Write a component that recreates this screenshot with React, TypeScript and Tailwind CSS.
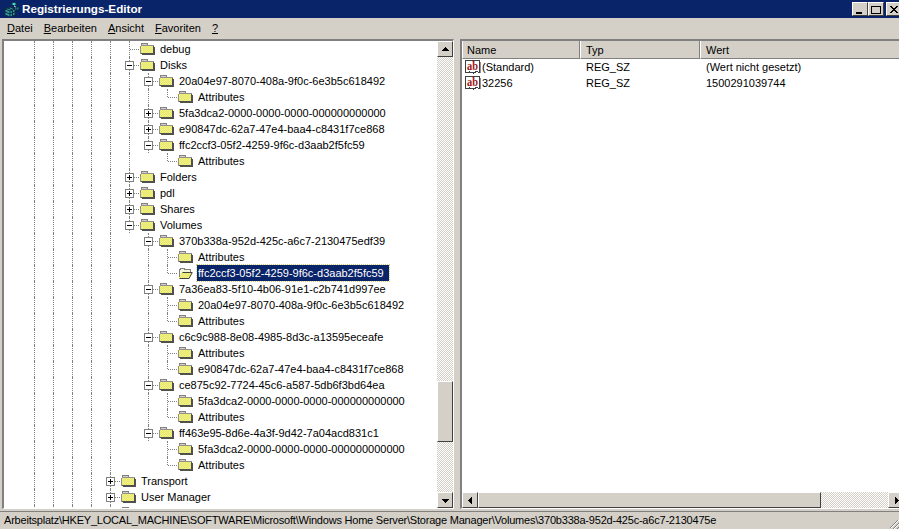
type Row = { guides: string; join?: "tee" | "end"; box?: "plus" | "minus"; label?: string; open?: boolean };

// each char of guides is one 19px column: "|" has a line, "." is empty. The last column holds box/connector.
const base = "||||";
const rows: Row[] = [
  { guides: base + "||", join: "tee", label: "debug" },
  { guides: base + "||", box: "minus", label: "Disks" },
  { guides: base + "|||", box: "minus", label: "20a04e97-8070-408a-9f0c-6e3b5c618492" },
  { guides: base + "||||", join: "end", label: "Attributes" },
  { guides: base + "|||", box: "plus", label: "5fa3dca2-0000-0000-0000-000000000000" },
  { guides: base + "|||", box: "plus", label: "e90847dc-62a7-47e4-baa4-c8431f7ce868" },
  { guides: base + "|||", box: "minus", label: "ffc2ccf3-05f2-4259-9f6c-d3aab2f5fc59" },
  { guides: base + "||.|", join: "end", label: "Attributes" },
  { guides: base + "||", box: "plus", label: "Folders" },
  { guides: base + "||", box: "plus", label: "pdl" },
  { guides: base + "||", box: "plus", label: "Shares" },
  { guides: base + "||", box: "minus", label: "Volumes" },
  { guides: base + "|.|", box: "minus", label: "370b338a-952d-425c-a6c7-2130475edf39" },
  { guides: base + "|.||", join: "tee", label: "Attributes" },
  { guides: base + "|.||", join: "end", label: "ffc2ccf3-05f2-4259-9f6c-d3aab2f5fc59", open: true },
  { guides: base + "|.|", box: "minus", label: "7a36ea83-5f10-4b06-91e1-c2b741d997ee" },
  { guides: base + "|.||", join: "tee", label: "20a04e97-8070-408a-9f0c-6e3b5c618492" },
  { guides: base + "|.||", join: "end", label: "Attributes" },
  { guides: base + "|.|", box: "minus", label: "c6c9c988-8e08-4985-8d3c-a13595eceafe" },
  { guides: base + "|.||", join: "tee", label: "Attributes" },
  { guides: base + "|.||", join: "end", label: "e90847dc-62a7-47e4-baa4-c8431f7ce868" },
  { guides: base + "|.|", box: "minus", label: "ce875c92-7724-45c6-a587-5db6f3bd64ea" },
  { guides: base + "|.||", join: "tee", label: "5fa3dca2-0000-0000-0000-000000000000" },
  { guides: base + "|.||", join: "end", label: "Attributes" },
  { guides: base + "|.|", box: "minus", label: "ff463e95-8d6e-4a3f-9d42-7a04acd831c1" },
  { guides: base + "|..|", join: "tee", label: "5fa3dca2-0000-0000-0000-000000000000" },
  { guides: base + "|..|", join: "end", label: "Attributes" },
  { guides: base + "|", box: "plus", label: "Transport" },
  { guides: base + "|", box: "plus", label: "User Manager" },
  { guides: base + "|", join: "end" },
];

const values = [
  { name: "(Standard)", type: "REG_SZ", value: "(Wert nicht gesetzt)" },
  { name: "32256", type: "REG_SZ", value: "1500291039744" },
];

const raised = "border border-t-white border-l-white border-r-[#404040] border-b-[#404040]";

const Dither = () => (
  <defs>
    <pattern id="dither" width="2" height="2" patternUnits="userSpaceOnUse">
      <rect width="2" height="2" fill="#f8f850" />
      <rect width="1" height="1" fill="#e0e0a0" />
      <rect x="1" y="1" width="1" height="1" fill="#e0e0a0" />
    </pattern>
  </defs>
);

const Folder = ({ open }: { open?: boolean }) => (
  <svg width="15" height="12" viewBox="0 0 15 12" className="shrink-0 ml-px" shapeRendering="crispEdges">
    <Dither />
    {open ? (
      <>
        <path d="M1.5 10.5v-8h1v-1h4v1h6v2" fill="#f4f4d8" stroke="#808080" />
        <rect x="2" y="3" width="10" height="3" fill="#f4f4d8" />
        <path d="M4 5h10.5l-3 6.5H1z" fill="url(#dither)" />
        <path d="M4.5 5.5h10M14 6l-3 5.5H1.500" fill="none" stroke="#404040" shapeRendering="auto" />
      </>
    ) : (
      <>
        <path d="M2 .5h5l1 2h5v1H1V1.500z" fill="#d4d0c8" stroke="#808080" />
        <rect x="1" y="2" width="12" height="8" fill="url(#dither)" />
        <path d="M.5 10.500v-8M.5 2.500h13" fill="none" stroke="#909090" />
        <path d="M13.500 3v7.500H1M14.500 4v7.500H2" fill="none" stroke="#505050" />
      </>
    )}
  </svg>
);

const ValueIcon = () => (
  <svg width="16" height="16" viewBox="0 0 16 16" className="shrink-0 block">
    <path d="M.5 1.500h14v12l-3-1-3 1.500-4-1-4 1z" fill="#fff" stroke="#404040" shapeRendering="crispEdges" />
    <path d="M15.500 3v11" stroke="#909090" shapeRendering="crispEdges" />
    <text x="2" y="11" fill="#a01414" fontSize="12" fontWeight="700" textLength="11" lengthAdjust="spacingAndGlyphs" fontFamily="'Liberation Serif', serif">ab</text>
  </svg>
);

const Arrow = ({ d }: { d: string }) => (
  <svg width="9" height="9" viewBox="0 0 9 9" shapeRendering="crispEdges">
    <path d={d} fill="#000" />
  </svg>
);

const ScrollButton = ({ d }: { d: string }) => (
  <div className={`w-[16px] h-[16px] shrink-0 bg-[#d4d0c8] flex items-center justify-center ${raised}`}>
    <Arrow d={d} />
  </div>
);

const TreeRow = ({ row }: { row: Row }) => {
  const cols = row.guides.split("");
  return (
    <div className="flex h-4 items-center shrink-0 pl-[21px]">
      {cols.map((c, i) => {
        const last = i === cols.length - 1;
        return (
          <div key={i} className="relative w-[19px] h-4 shrink-0">
            {c === "|" && !(last && row.box) && (
              <div
                className={`absolute left-[9px] top-0 border-l border-dotted border-[#808080] ${
                  last && row.join === "end" ? "h-[8px]" : "h-4"
                }`}
              />
            )}
            {last && row.box && (
              <>
                <div className="absolute left-[9px] top-0 h-4 border-l border-dotted border-[#808080]" />
                <div className="absolute left-[5px] top-[4px] w-[9px] h-[9px] bg-white border border-[#808080] z-10">
                  <svg width="7" height="7" viewBox="0 0 7 7" shapeRendering="crispEdges" className="block">
                    <rect x="1" y="3" width="5" height="1" fill="#000" />
                    {row.box === "plus" && <rect x="3" y="1" width="1" height="5" fill="#000" />}
                  </svg>
                </div>
              </>
            )}
            {last && <div className="absolute left-[10px] top-[8px] w-[9px] border-t border-dotted border-[#808080]" />}
          </div>
        );
      })}
      <Folder open={row.open} />
      {row.label && (
        <span
          className={`ml-[4px] h-4 leading-[16px] pl-[1px] whitespace-nowrap ${
            row.open ? "bg-[#0a246a] text-white pr-[5px] outline-1 outline-dotted outline-[#d4d080]" : "text-black"
          }`}
        >
          {row.label}
        </span>
      )}
    </div>
  );
};

const Header = ({ label, className }: { label: string; className: string }) => (
  <div className={`h-[18px] leading-[18px] bg-[#d4d0c8] border-r border-b border-r-[#808080] border-b-[#808080] border-l border-l-white ${className}`}>
    {label}
  </div>
);

export default function App() {
  return (
    <div
      className="w-[899px] h-[529px] bg-[#d4d0c8] flex flex-col overflow-hidden text-[11px] text-black"
      style={{ fontFamily: "'Liberation Sans', Arial, sans-serif" }}
    >
      {/* title bar */}
      <div className="h-[18px] bg-[#0a246a] flex items-center pl-[4px] shrink-0">
        <svg width="16" height="16" viewBox="0 0 16 16">
          <path d="M1 8l5-2 5 2v6l-5 2-5-2z" fill="#2f9aa8" stroke="#0c2c38" />
          <path d="M1 8l5 2 5-2M6 10v6M3.500 7l5 2v6M1 11l5 2 5-2" fill="none" stroke="#0c2c38" />
          <path d="M7 3l3-2 3 2-3 2z" fill="#40d8d8" stroke="#0c2c38" />
          <path d="M10 5l2 1v3" stroke="#c8e8f0" fill="none" />
          <rect x="12" y="6" width="3" height="3" fill="#1878a0" stroke="#0c2c38" />
        </svg>
        <span className="ml-[2px] text-white font-bold text-[11.7px]">Registrierungs-Editor</span>
        <div className="ml-auto -mr-[3px] flex">
          {["min", "max", "close"].map((b) => (
            <div key={b} className={`w-[16px] h-[14px] bg-[#d4d0c8] flex items-center justify-center ${b === "close" ? "ml-[2px]" : ""} ${raised}`}>
              <svg width="10" height="9" viewBox="0 0 10 9" shapeRendering="crispEdges">
                {b === "min" && <rect x="1" y="7" width="6" height="2" fill="#000" />}
                {b === "max" && <path d="M0.500 1.500h9v7h-9zM0 1h10" fill="none" stroke="#000" />}
                {b === "close" && <path d="M1 1l7 7M2 1l7 7M8 1L1 8M9 1L2 8" stroke="#000" shapeRendering="auto" />}
              </svg>
            </div>
          ))}
        </div>
      </div>

      {/* menu */}
      <div className="h-[21px] flex items-center gap-[11px] pl-[7px] shrink-0">
        <span><u>D</u>atei</span>
        <span><u>B</u>earbeiten</span>
        <span><u>A</u>nsicht</span>
        <span><u>F</u>avoriten</span>
        <span><u>?</u></span>
      </div>

      <div className="flex-1 flex gap-[6px] min-h-0">
        {/* tree pane */}
        <div className="w-[452px] ml-[2px] shrink-0 border-t-2 border-l-2 border-[#808080] border-b border-r border-b-white border-r-white flex min-h-0 bg-white">
          <div className="flex-1 flex flex-col overflow-hidden min-w-0">
            {rows.map((r, i) => (
              <TreeRow key={i} row={r} />
            ))}
          </div>
          <div className="w-[16px] flex flex-col shrink-0 bg-[repeating-conic-gradient(#d4d0c8_0_25%,#ffffff_0_50%)] bg-[length:2px_2px]">
            <ScrollButton d="M4 2h1v1h1v1h1v1h1v1H1V5h1V4h1V3h1z" />
            <div className="flex-1 flex flex-col justify-end">
              <div className={`h-[61px] mb-[50px] bg-[#d4d0c8] ${raised}`} />
            </div>
            <ScrollButton d="M1 3h7v1H7v1H6v1H5v1H4V6H3V5H2V4H1z" />
          </div>
        </div>

        {/* value pane, runs past the right edge of the shot */}
        <div className="w-[445px] shrink-0 border-t-2 border-l-2 border-[#808080] border-b border-r border-b-white border-r-white bg-white flex flex-col">
          <div className="flex shrink-0">
            <Header label="Name" className="w-[118px] pl-[4px]" />
            <Header label="Typ" className="w-[120px] pl-[5px]" />
            <Header label="Wert" className="flex-1 pl-[5px]" />
          </div>
          <div className="flex-1">
            {values.map((v) => (
              <div key={v.name} className="flex h-4 items-center">
                <div className="w-[118px] flex items-center pl-[3px]">
                  <ValueIcon />
                  <span className="ml-[1px]">{v.name}</span>
                </div>
                <div className="w-[120px] pl-[6px]">{v.type}</div>
                <div className="pl-[6px]">{v.value}</div>
              </div>
            ))}
          </div>
          <div className="flex h-[16px] shrink-0 bg-[repeating-conic-gradient(#d4d0c8_0_25%,#ffffff_0_50%)] bg-[length:2px_2px]">
            <ScrollButton d="M5 1h1v7H5V7H4V6H3V5H2V4h1V3h1V2h1z" />
            <div className={`w-[343px] bg-[#d4d0c8] ${raised}`} />
            <div className="flex-1" />
            <ScrollButton d="M3 1h1v1h1v1h1v1h1v1H6v1H5v1H4v1H3z" />
          </div>
        </div>
      </div>

      {/* status bar */}
      <div className="relative h-[18px] mt-[2px] shrink-0 flex items-center border-t border-[#808080] pl-[4px] tracking-[-0.21px] whitespace-nowrap overflow-hidden">
        Arbeitsplatz\HKEY_LOCAL_MACHINE\SOFTWARE\Microsoft\Windows Home Server\Storage Manager\Volumes\370b338a-952d-425c-a6c7-2130475e
        <svg width="10" height="10" viewBox="0 0 10 10" className="absolute right-0 bottom-0">
          <path d="M9 1L1 9M10 4L4 10M10 8l-2 2" stroke="#808080" fill="none" />
          <path d="M10 1L2 9M10 5L5 10" stroke="#ffffff" fill="none" />
        </svg>
      </div>
    </div>
  );
}
